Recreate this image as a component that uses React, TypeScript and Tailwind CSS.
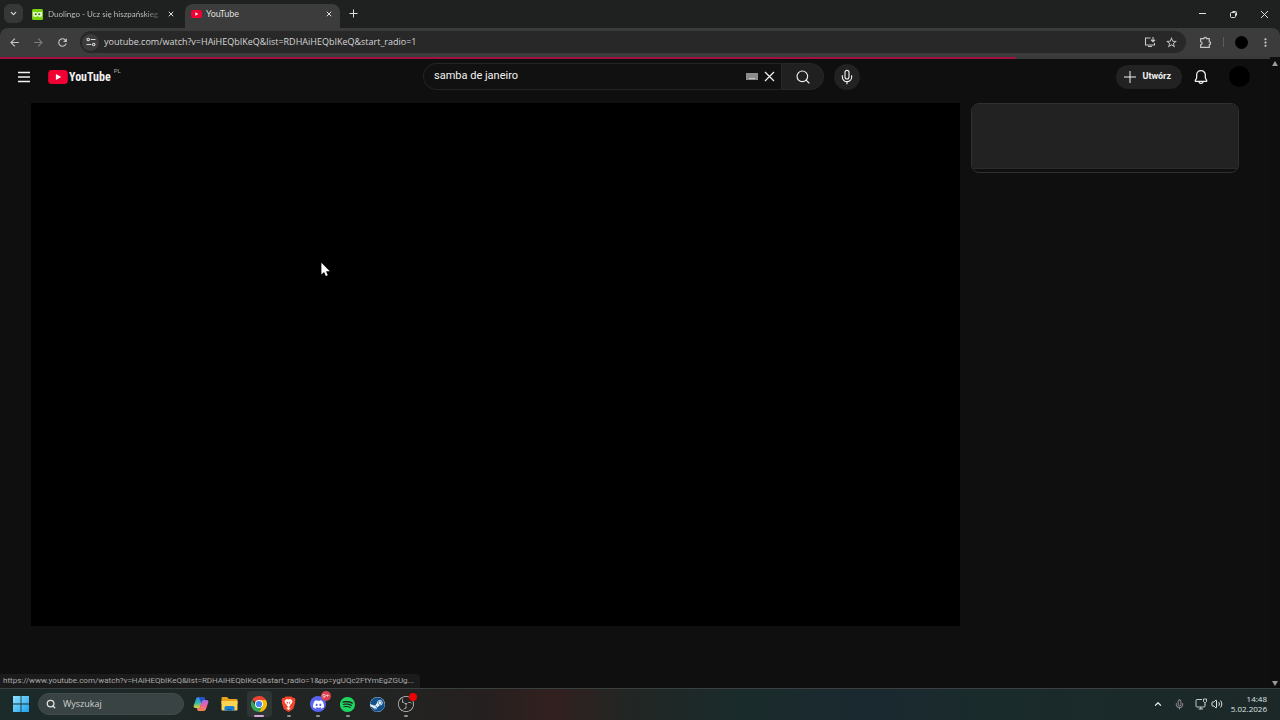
import React, { useState } from 'react';
import { ChevronDown, ChevronUp, Mic, Search, Volume2, X } from 'lucide-react';
import { MdArrowBack, MdArrowForward, MdRefresh, MdStarOutline, MdOutlineExtension, MdMoreVert } from 'react-icons/md';
import { SiDiscord, SiObsstudio, SiSpotify } from 'react-icons/si';
import { FaSteam } from 'react-icons/fa';

const VIDEO_QUERY = 'watch?v=HAiHEQbIKeQ&list=RDHAiHEQbIKeQ&start_radio=1';

const DuolingoIcon = () => (
  <svg width="11" height="11" viewBox="0 0 22 22" className="shrink-0">
    <rect width="22" height="22" rx="3" fill="#78d30c" />
    <path d="M2 6h7l2 2 2-2h7v6a4 4 0 0 1-4 4h-2l-3-2-3 2H6a4 4 0 0 1-4-4z" fill="#e8f9d0" />
    <circle cx="7.500" cy="10.500" r="2.200" fill="#3c7a10" />
    <circle cx="14.500" cy="10.500" r="2.200" fill="#3c7a10" />
  </svg>
);

const YouTubeMark = ({ className }: { className: string }) => (
  <svg viewBox="0 0 28 20" className={className}>
    <rect width="28" height="20" rx="5" fill="#f00033" />
    <path d="M11 5.600v8.800l7.600-4.400z" fill="#fff" />
  </svg>
);

const SiteInfoIcon = () => (
  <svg width="10" height="10" viewBox="0 0 20 20" fill="none" stroke="#d5d5d5" strokeWidth="2.200">
    <circle cx="4.500" cy="5" r="2.500" />
    <path d="M9.500 5H19M1 15h9.500" />
    <circle cx="15.500" cy="15" r="2.500" />
  </svg>
);

const InstallIcon = () => (
  <svg width="12" height="12" viewBox="0 0 24 24" fill="none" stroke="#c8c8c8" strokeWidth="2.200">
    <path d="M13 4H3v14h18v-4M8 21h8M18 2v9M14 7.500l4 4 4-4" />
  </svg>
);

// chrome's puzzle piece, with the notch on the left and the knob on the right
const ExtensionIcon = () => (
  <svg width="13" height="13" viewBox="0 0 24 24" fill="none" stroke="currentColor" strokeWidth="2.200" strokeLinejoin="round">
    <path d="M3 5h6a2.500 2.500 0 0 1 5 0h5v6a2.500 2.500 0 0 1 0 5v5H3v-5a2.700 2.700 0 0 0 0-5.400z" />
  </svg>
);

const BellIcon = () => (
  <svg width="16" height="16" viewBox="0 0 24 24" fill="none" stroke="#f1f1f1" strokeWidth="1.900" strokeLinejoin="round">
    <path d="M12 2.500c-4 0-6.500 3-6.500 6.500v4.500L3.500 17v1.500h17V17l-2-3.500V9c0-3.500-2.500-6.500-6.500-6.500z" />
    <path d="M9 18.500c0 2 1.300 3.200 3 3.200s3-1.200 3-3.200" />
  </svg>
);

const WindowsIcon = () => (
  <svg width="16" height="16" viewBox="0 0 16 16">
    <defs>
      <linearGradient id="win" x1="0" y1="0" x2="1" y2="1">
        <stop offset="0" stopColor="#8fe3ff" />
        <stop offset="1" stopColor="#1ba0ee" />
      </linearGradient>
    </defs>
    <path d="M0 0h7.600v7.600H0zM8.400 0H16v7.600H8.400zM0 8.400h7.600V16H0zM8.400 8.400H16V16H8.400z" fill="url(#win)" />
  </svg>
);

const CopilotIcon = () => (
  <svg width="16" height="16" viewBox="0 0 32 32">
    <defs>
      <linearGradient id="copA" x1="0" y1="0" x2="0" y2="1">
        <stop offset="0" stopColor="#2f8cf0" />
        <stop offset=".5" stopColor="#2bb8b0" />
        <stop offset="1" stopColor="#e8cf35" />
      </linearGradient>
      <linearGradient id="copB" x1="0" y1="0" x2="0" y2="1">
        <stop offset="0" stopColor="#a06bf0" />
        <stop offset=".5" stopColor="#f0609a" />
        <stop offset="1" stopColor="#f58a4a" />
      </linearGradient>
    </defs>
    <path d="M11 2h9c2 0 3 1 3.500 3l.8 3h-3c-2 0-3 1-3.600 3l-3 10c-.6 2-1.700 3-3.700 3H5c-3 0-4.500-2-3.500-5L6 6c.8-2.500 2.500-4 5-4z" fill="url(#copA)" />
    <path d="M21 30h-9c-2 0-3-1-3.500-3l-.8-3h3c2 0 3-1 3.600-3l3-10c.6-2 1.700-3 3.700-3h6c3 0 4.500 2 3.500 5L26 26c-.8 2.500-2.500 4-5 4z" fill="url(#copB)" />
    <path d="M11 2h9c2 0 3 1 3.500 3l.8 3h-3c-2 0-3 1-3.600 3l-1 3.200z" fill="#2451c8" />
  </svg>
);

const FolderIcon = () => (
  <svg width="17" height="16" viewBox="0 0 34 32">
    <path d="M1 4a2 2 0 0 1 2-2h9l4 4h15a2 2 0 0 1 2 2v8H1z" fill="#e5a21a" />
    <path d="M1 10h32v17a2 2 0 0 1-2 2H3a2 2 0 0 1-2-2z" fill="#ffd453" />
    <path d="M7 29v-6a3 3 0 0 1 3-3h14a3 3 0 0 1 3 3v6z" fill="#1b7fd4" />
    <path d="M12 26h10v3H12z" fill="#155fa8" />
  </svg>
);

const ChromeIcon = () => (
  <svg width="16" height="16" viewBox="0 0 48 48">
    <path d="M24 24 3.200 12A24 24 0 0 1 44.800 12z" fill="#ea4335" />
    <path d="M24 12h20.800A24 24 0 0 1 24 48l10.400-18z" fill="#fbbc05" />
    <path d="M13.600 30 3.200 12A24 24 0 0 0 24 48l10.400-18z" fill="#34a853" />
    <circle cx="24" cy="24" r="12" fill="#fff" />
    <circle cx="24" cy="24" r="9.300" fill="#4285f4" />
  </svg>
);

const BraveIcon = () => (
  <svg width="15" height="16" viewBox="0 0 30 32">
    <path d="M9 1h12l3 3 3-.5 2 4-1 3 .5 3L25 24c-.5 2-2 3-3.500 4L15 32l-6.500-4C7 27 5.500 26 5 24L1.500 13.500l.5-3-1-3 2-4L6 4z" fill="#f4452c" />
    <path d="M15 7l4-1 4 4-1 4-4 4 .5 2-3.500 2-3.500-2 .5-2-4-4-1-4 4-4z" fill="#fff" />
    <path d="M11 11l3 1-1 5zM19 11l-3 1 1 5z" fill="#f4452c" />
    <path d="M15 22l4 2.500-4 3.500-4-3.500z" fill="#fff" />
  </svg>
);

const NetworkIcon = () => (
  <svg width="12" height="12" viewBox="0 0 24 24" fill="none" stroke="#d5dada" strokeWidth="1.800">
    <path d="M14 3H4a2 2 0 0 0-2 2v11a2 2 0 0 0 2 2h14a2 2 0 0 0 2-2v-3M7 22h9M11.500 18v4" />
    <path d="M17 2h6v5l-2 2h-2l-2-2zM20 9v5" />
  </svg>
);

const CursorIcon = () => (
  <svg width="9" height="15" viewBox="0 0 12 19" className="absolute left-[290px] top-[159px]">
    <path d="M.5.500v15.700l3.600-3.500 2.300 5.600 2.600-1.100-2.300-5.500h5z" fill="#fff" />
  </svg>
);

const taskbarApps = [
  { name: 'Copilot', icon: <CopilotIcon />, running: false, active: false },
  { name: 'Eksplorator plików', icon: <FolderIcon />, running: false, active: false },
  { name: 'Google Chrome', icon: <ChromeIcon />, running: true, active: true },
  { name: 'Brave', icon: <BraveIcon />, running: true, active: false },
  { name: 'Discord', icon: <span className="flex size-4 items-center justify-center rounded-full bg-[#5865f2] text-white"><SiDiscord size={11} /></span>, running: true, active: false, badge: '9+' },
  { name: 'Spotify', icon: <SiSpotify size={15} color="#1ed760" />, running: true, active: false },
  { name: 'Steam', icon: <span className="rounded-full bg-[#e4eef8] text-[#12508c]"><SteamMark /></span>, running: false, active: false },
  { name: 'OBS Studio', icon: <SiObsstudio size={16} color="#c9c9c9" />, running: true, active: false, dot: true },
];

function SteamMark() {
  return <FaSteam size={15} className="block" />;
}

const TabStrip = () => (
  <div className="flex h-7 items-end bg-[#1f2020] pl-1 text-[#dedede]">
    <button aria-label="Przeszukaj karty" className="mb-[5px] flex h-[19px] w-[19px] items-center justify-center rounded-md bg-[#363737]">
      <ChevronDown size={9} strokeWidth={3} />
    </button>
    <div className="flex h-6 w-[162px] items-center gap-[5px] pb-1 pr-[10px] pl-[9px]">
      <DuolingoIcon />
      <span className="flex-1 whitespace-nowrap bg-linear-to-r from-[#c6c7c7] from-85% to-[#3a3b3b] bg-clip-text font-[Lato,sans-serif] text-[8px] text-transparent">Duolingo - Ucz się hiszpańskieg</span>
      <button aria-label="Zamknij kartę"><X size={8} strokeWidth={3} /></button>
    </div>
    <div className="flex h-6 w-[155px] items-center gap-1 rounded-t-lg bg-[#3c3c3c] pb-1 pl-[6px] pr-[7px]">
      <YouTubeMark className="h-2 w-[11px]" />
      <span className="flex-1 font-[Lato,sans-serif] text-[9px]">YouTube</span>
      <button aria-label="Zamknij kartę"><X size={8} strokeWidth={3} /></button>
    </div>
    <button aria-label="Nowa karta" className="mb-[10px] ml-2">
      <svg width="10" height="10" viewBox="0 0 10 10" stroke="currentColor" fill="none"><path d="M5.500 1.500v8M1.500 5.500h8" /></svg>
    </button>
    <div className="ml-auto flex h-7 items-center gap-[22px] pr-[11px]">
      <button aria-label="Minimalizuj">
        <svg width="9" height="9" viewBox="0 0 9 9" stroke="currentColor"><path d="M1 3.500h7" /></svg>
      </button>
      <button aria-label="Przywróć">
        <svg width="9" height="9" viewBox="0 0 9 9" stroke="currentColor" fill="none"><rect x="1.500" y="2.500" width="5" height="5" rx="1" /><path d="M3.500 1.500h3a1 1 0 0 1 1 1v3" /></svg>
      </button>
      <button aria-label="Zamknij">
        <svg width="9" height="9" viewBox="0 0 9 9" stroke="currentColor"><path d="M1 1l7 7M8 1L1 8" /></svg>
      </button>
    </div>
  </div>
);

const Toolbar = () => {
  const [url, setUrl] = useState(`youtube.com/${VIDEO_QUERY}`);

  return (
    <div className="bg-[#1f2020]">
      <div className="flex h-[29px] items-center rounded-t-lg bg-[#3c3c3c] pb-px pl-2 pr-2 text-[#c8c8c8]">
        <button aria-label="Wstecz"><MdArrowBack size={13} /></button>
        <button aria-label="Dalej" className="ml-[11px] text-[#7c7c7c]"><MdArrowForward size={13} /></button>
        <button aria-label="Odśwież" className="ml-[11px]"><MdRefresh size={13} /></button>
        <div className="ml-[11px] flex h-[22px] flex-1 items-center rounded-full bg-[#282828] pl-[2px] pr-2">
          <button aria-label="Informacje o witrynie" className="flex size-[17px] items-center justify-center rounded-full bg-[#3c3c3c]"><SiteInfoIcon /></button>
          <input aria-label="Adres" value={url} onChange={e => setUrl(e.target.value)} className="ml-[5px] min-w-0 flex-1 bg-transparent text-[9px] text-[#d6d6d6] outline-none" />
          <button aria-label="Zainstaluj"><InstallIcon /></button>
          <button aria-label="Dodaj do zakładek" className="ml-[9px]"><MdStarOutline size={13} /></button>
        </div>
        <button aria-label="Rozszerzenia" className="ml-[13px]"><ExtensionIcon /></button>
        <span className="ml-[11px] h-[10px] w-px bg-[#5c5c5c]" />
        <button aria-label="Profil" className="ml-[11px] size-[13px] rounded-full bg-black" />
        <button aria-label="Menu" className="ml-[11px]"><MdMoreVert size={13} /></button>
      </div>
    </div>
  );
};

const Masthead = () => {
  const [query, setQuery] = useState('samba de janeiro');

  return (
    <header className="flex h-[35px] items-center pl-[18px] pr-[5px] font-[Roboto,sans-serif] text-[#f1f1f1]">
      <div className="flex flex-1 items-center">
        <button aria-label="Przewodnik">
          <svg width="12" height="12" viewBox="0 0 12 12" stroke="currentColor" strokeWidth="1.300"><path d="M0 1.500h12M0 6h12M0 10.500h12" /></svg>
        </button>
        <a href="#" aria-label="YouTube" className="ml-[18px] flex items-center">
          <YouTubeMark className="h-[14px] w-5" />
          <span className="ml-px font-['Liberation_Sans_Narrow','Roboto_Condensed',sans-serif] text-[12px] font-bold leading-4">YouTube</span>
          <span className="mb-3 ml-[3px] text-[6px] leading-2 text-[#aaa]">PL</span>
        </a>
      </div>
      <form className="flex items-center" onSubmit={e => e.preventDefault()}>
        <div className="flex h-[27px] w-[358px] items-center rounded-l-full border border-r-0 border-[#242424] bg-[#111] pl-[10px] pr-[6px]">
          <input aria-label="Szukaj" value={query} onChange={e => setQuery(e.target.value)} className="min-w-0 flex-1 bg-transparent text-[11px] outline-none" />
          <button type="button" aria-label="Klawiatura" className="flex h-[7px] w-3 items-end justify-center bg-[#8c8c8c] pb-px">
            <span className="h-px w-[6px] bg-[#c4c4c4]" />
          </button>
          <button type="button" aria-label="Wyczyść" className="ml-[6px]" onClick={() => setQuery('')}>
            <svg width="11" height="11" viewBox="0 0 11 11" stroke="currentColor" strokeWidth="1.200"><path d="M1 1l9 9M10 1l-9 9" /></svg>
          </button>
        </div>
        <button aria-label="Szukaj" className="flex h-[27px] w-[43px] items-center justify-center rounded-r-full border border-[#282828] bg-[#202020]">
          <Search size={16} strokeWidth={1.700} />
        </button>
        <button type="button" aria-label="Wyszukiwanie głosowe" className="ml-[10px] flex size-[26px] items-center justify-center rounded-full bg-[#222]">
          <Mic size={16} strokeWidth={1.700} />
        </button>
      </form>
      <div className="flex flex-1 items-center justify-end">
        <button className="flex h-6 items-center gap-[6px] rounded-full bg-[#222] pl-2 pr-[11px] text-[9px] font-bold">
          <svg width="12" height="12" viewBox="0 0 12 12" stroke="currentColor"><path d="M6 0v12M0 6h12" /></svg>
          Utwórz
        </button>
        <button aria-label="Powiadomienia" className="ml-[11px]"><BellIcon /></button>
        <button aria-label="Konto" className="ml-5 mr-[15px] size-[21px] rounded-full bg-black" />
      </div>
    </header>
  );
};

const Taskbar = () => (
  <div className="flex h-8 items-center border-t border-[#39403f] bg-[linear-gradient(to_right,#1b2b2a,#222423_30%,#25201f_38%,#32201f_43%,#222624_49%,#1a2b2b_58%,#1a2930_68%,#1a2b2b_78%,#1c2827)] pb-px pl-[13px] pr-[13px] text-[#dfe4e3]">
    <button aria-label="Start"><WindowsIcon /></button>
    <label className="ml-[9px] flex h-[22px] w-[146px] items-center gap-[7px] rounded-full border border-[#424b4b] bg-[#3a4343] pl-[7px]">
      <Search size={10} strokeWidth={3} />
      <input placeholder="Wyszukaj" aria-label="Wyszukaj" className="w-24 bg-transparent text-[9px] outline-none placeholder:text-[#cdd2d1]" />
    </label>
    <div className="ml-1 flex w-[231px] justify-between">
      {taskbarApps.map(app => (
        <button key={app.name} aria-label={app.name} className={`relative flex h-[26px] w-[25px] items-center justify-center rounded-sm ${app.active ? 'bg-[#2d3635]' : ''}`}>
          {app.icon}
          {app.badge && <span className="absolute right-0 top-0 flex h-[10px] w-[10px] items-center justify-center rounded-full bg-[#d8434f] text-[6px] leading-none text-white">{app.badge}</span>}
          {app.dot && <span className="absolute right-[2px] top-[2px] size-2 rounded-full bg-[#f00000]" />}
          {app.running && <span className={`absolute bottom-0 h-[2px] rounded-full ${app.active ? 'w-[10px] bg-[#d9a6d8]' : 'w-1 bg-[#8d9392]'}`} />}
        </button>
      ))}
    </div>
    <div className="ml-auto flex items-center">
      <button aria-label="Ukryte ikony"><ChevronUp size={10} strokeWidth={3} /></button>
      <Mic size={11} strokeWidth={2} className="ml-[11px] text-[#a798ad]" />
      <button className="ml-[10px] flex items-center gap-1" aria-label="Sieć i głośność">
        <NetworkIcon />
        <Volume2 size={12} strokeWidth={2} />
      </button>
      <div className="ml-2 text-right text-[8px] leading-[10px]">
        <div>14:48</div>
        <div>5.02.2026</div>
      </div>
    </div>
  </div>
);

const App: React.FC = () => (
  <div className="flex min-h-screen flex-col bg-[#0f0f0f] font-['Open_Sans','Noto_Sans',sans-serif]">
    <TabStrip />
    <Toolbar />
    <div className="relative flex flex-1">
      <div className="min-w-0 flex-1">
        <div className="h-[2px] bg-[#3a3a3a]">
          <div className="h-full w-4/5 bg-[#a01240]" />
        </div>
        <Masthead />
        <main className="mt-[9px] flex items-start gap-[11px] pl-[31px] pr-[31px]">
          <div className="relative aspect-video flex-1 bg-black">
            <CursorIcon />
          </div>
          <aside className="w-[268px] rounded-lg border border-[#303030] pb-[3px]">
            <div className="h-[65px] rounded-t-[7px] border-b border-[#2b2b2b] bg-[#222]" />
          </aside>
        </main>
      </div>
      <div className="flex w-[10px] flex-col items-center justify-between bg-[#0e0e0e] pb-[2px] pt-[4px]">
        <svg width="6" height="5" viewBox="0 0 6 5"><path d="M3 0l3 5H0z" fill="#9a9a9a" /></svg>
        <svg width="6" height="5" viewBox="0 0 6 5"><path d="M3 5L0 0h6z" fill="#9a9a9a" /></svg>
      </div>
      <div className="absolute bottom-0 left-0 h-[14px] whitespace-nowrap rounded-tr bg-[#1b1b1b] pl-[3px] pr-[6px] font-[Roboto,sans-serif] text-[8px] leading-[14px] text-[#a8a8a8]">
        https://www.youtube.com/{VIDEO_QUERY}&pp=ygUQc2FtYmEgZGUg...
      </div>
    </div>
    <Taskbar />
  </div>
);

export default App;
